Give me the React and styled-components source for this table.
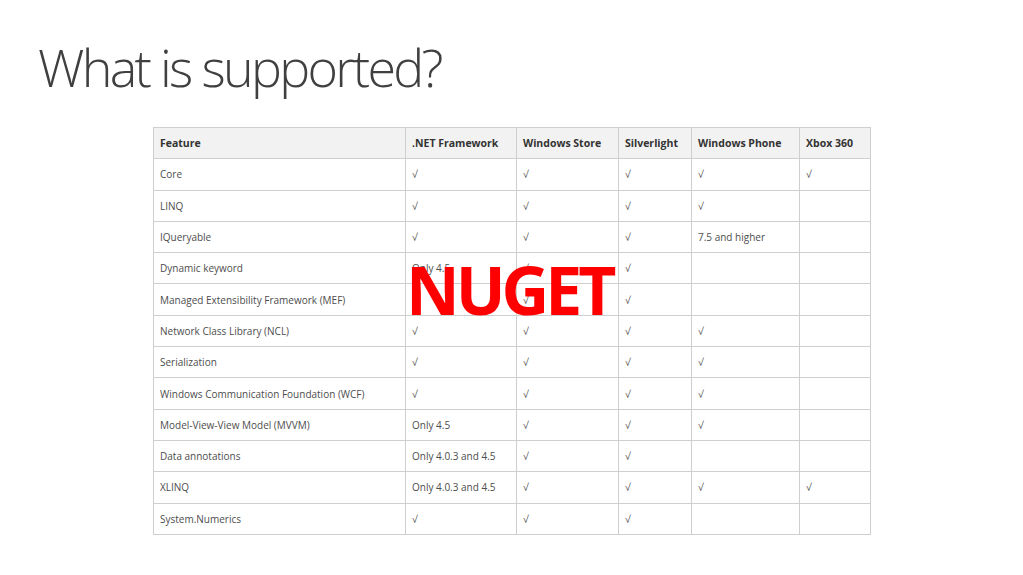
import styled, { createGlobalStyle } from "styled-components";

const Global = createGlobalStyle`
  html, body {
    margin: 0;
    padding: 0;
    background: #ffffff;
  }
  #root {
    width: 1023px;
    height: 575px;
    overflow: hidden;
  }
`;

const Slide = styled.div`
  display: flex;
  flex-direction: column;
  height: 575px;
  font-family: "Open Sans", "Noto Sans", sans-serif;
`;

const Title = styled.h1`
  margin: 0;
  padding: 33px 0 0 38px;
  height: 127px;
  box-sizing: border-box;
  font-family: "Open Sans", "Noto Sans", sans-serif;
  font-weight: 300;
  font-size: 52px;
  line-height: 68px;
  color: #404040;
  letter-spacing: -2.7px;
`;

const TableWrap = styled.div`
  position: relative;
  margin-left: 153px;
  width: 717px;
`;

const Table = styled.table`
  border-collapse: collapse;
  table-layout: fixed;
  width: 717px;
  color: #444;
`;

const Cell = styled.td`
  border: 1px solid #cfcfcf;
  height: 31.3px;
  padding: 0 0 0 6px;
  box-sizing: border-box;
  white-space: nowrap;
  text-align: left;
  font-size: ${(p) => (p.$head ? "10.5px" : "10px")};
  font-weight: ${(p) => (p.$head ? 700 : 400)};
  color: ${(p) => (p.$head ? "#333" : "#4d4d4d")};
  background: ${(p) => (p.$head ? "#f2f2f2" : "#fff")};
`;

const Stamp = styled.div`
  position: absolute;
  left: 253px;
  top: 129px;
  font-family: "Open Sans", "Noto Sans", sans-serif;
  font-weight: 700;
  font-size: 66px;
  line-height: 1;
  letter-spacing: -4px;
  color: #ff0000;
`;

const widths = [252, 111, 102, 73, 108, 71];
const header = [
  "Feature",
  ".NET Framework",
  "Windows Store",
  "Silverlight",
  "Windows Phone",
  "Xbox 360",
];
const C = "√";
const rows = [
  ["Core", C, C, C, C, C],
  ["LINQ", C, C, C, C, ""],
  ["IQueryable", C, C, C, "7.5 and higher", ""],
  ["Dynamic keyword", "Only 4.5", C, C, "", ""],
  ["Managed Extensibility Framework (MEF)", C, C, C, "", ""],
  ["Network Class Library (NCL)", C, C, C, C, ""],
  ["Serialization", C, C, C, C, ""],
  ["Windows Communication Foundation (WCF)", C, C, C, C, ""],
  ["Model-View-View Model (MVVM)", "Only 4.5", C, C, C, ""],
  ["Data annotations", "Only 4.0.3 and 4.5", C, C, "", ""],
  ["XLINQ", "Only 4.0.3 and 4.5", C, C, C, C],
  ["System.Numerics", C, C, C, "", ""],
];

export default function App() {
  return (
    <Slide>
      <Global />
      <Title>What is supported?</Title>
      <TableWrap>
        <Table>
          <colgroup>
            {widths.map((w, i) => (
              <col key={i} style={{ width: w }} />
            ))}
          </colgroup>
          <thead>
            <tr>
              {header.map((h) => (
                <Cell as="th" $head key={h}>
                  {h}
                </Cell>
              ))}
            </tr>
          </thead>
          <tbody>
            {rows.map((r) => (
              <tr key={r[0]}>
                {r.map((v, i) => (
                  <Cell key={i}>{v}</Cell>
                ))}
              </tr>
            ))}
          </tbody>
        </Table>
        <Stamp>NUGET</Stamp>
      </TableWrap>
    </Slide>
  );
}
